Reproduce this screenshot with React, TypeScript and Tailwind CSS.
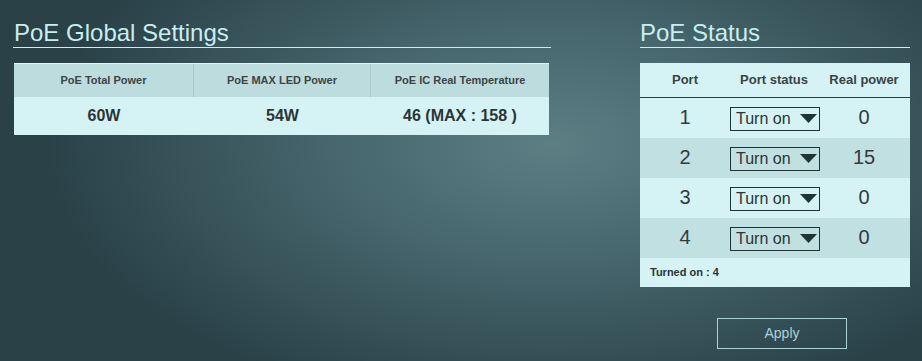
const ports = [
  { port: 1, power: 0 },
  { port: 2, power: 15 },
  { port: 3, power: 0 },
  { port: 4, power: 0 },
];

function Caret() {
  return (
    <svg width="17" height="10" viewBox="0 0 17 10" className="shrink-0">
      <path d="M0 0 L17 0 L8.5 9 Z" fill="#1f3535" />
    </svg>
  );
}

export default function App() {
  return (
    <div className="w-[922px] h-[361px] overflow-hidden bg-[radial-gradient(ellipse_55%_75%_at_60%_40%,#5c7f84_0%,#46656c_45%,#2a4148_100%)] font-['Liberation_Sans',Arial,sans-serif] flex">
      {/* Global settings */}
      <div className="w-[538px] ml-[13px] mt-[19px]">
        <h2 className="text-[24px] leading-[27px] text-[#c8eef0] pl-px">PoE Global Settings</h2>
        <div className="h-px bg-[#c8eef0] mt-[1px]" />
        <div className="mt-[15px] ml-px w-[535px]">
          <div className="grid grid-cols-[180px_177px_178px] h-[34px] bg-[#bddcde] border-t border-[#e2f4f4] text-[11px] font-bold text-[#3c4446]">
            <div className="flex items-center justify-center border-r border-[#a8c8ca]">PoE Total Power</div>
            <div className="flex items-center justify-center border-r border-[#a8c8ca]">PoE MAX LED Power</div>
            <div className="flex items-center justify-center">PoE IC Real Temperature</div>
          </div>
          <div className="grid grid-cols-[180px_177px_178px] h-[38px] bg-[#d5f3f5] text-[16px] font-bold text-[#2b3436]">
            <div className="flex items-center justify-center">60W</div>
            <div className="flex items-center justify-center">54W</div>
            <div className="flex items-center justify-center">46 (MAX : 158 )</div>
          </div>
        </div>
      </div>

      {/* PoE status */}
      <div className="w-[270px] ml-[89px] mt-[19px] flex flex-col">
        <h2 className="text-[24px] leading-[27px] text-[#c8eef0]">PoE Status</h2>
        <div className="h-px bg-[#c8eef0] mt-[1px]" />
        <div className="mt-[15px] bg-[#d5f3f5] text-[#2b3436]">
          <div className="grid grid-cols-[90px_88px_92px] h-[35px] border-b border-[#2b3e40] text-[13px] font-bold text-[#3a4244]">
            <div className="flex items-center justify-center">Port</div>
            <div className="flex items-center justify-center">Port status</div>
            <div className="flex items-center justify-center">Real power</div>
          </div>
          {ports.map((p, i) => (
            <div
              key={p.port}
              className={`grid grid-cols-[90px_88px_92px] h-[40px] ${i % 2 === 1 ? 'bg-[#c1e0e2]' : 'bg-[#d5f3f5]'}`}
            >
              <div className="flex items-center justify-center text-[20px] text-[#333b3d] pb-[3px]">{p.port}</div>
              <div className="flex items-center justify-center pl-[2px] pt-[2px]">
                <div className="w-[90px] h-[24px] border border-[#1f3535] flex items-center justify-between pl-[5px] pr-[2px] text-[16px] text-[#2b3436] shrink-0">
                  <span>Turn on</span>
                  <Caret />
                </div>
              </div>
              <div className="flex items-center justify-center text-[20px] text-[#333b3d] pb-[3px]">{p.power}</div>
            </div>
          ))}
          <div className="h-[29px] flex items-center pl-[10px] text-[11px] font-bold text-[#2b3436]">Turned on : 4</div>
        </div>
        <button className="mt-[31px] ml-[77px] w-[130px] h-[31px] border border-[#a8d2d4] text-[14px] text-[#a8d2d4] flex items-center justify-center">
          Apply
        </button>
      </div>
    </div>
  );
}
